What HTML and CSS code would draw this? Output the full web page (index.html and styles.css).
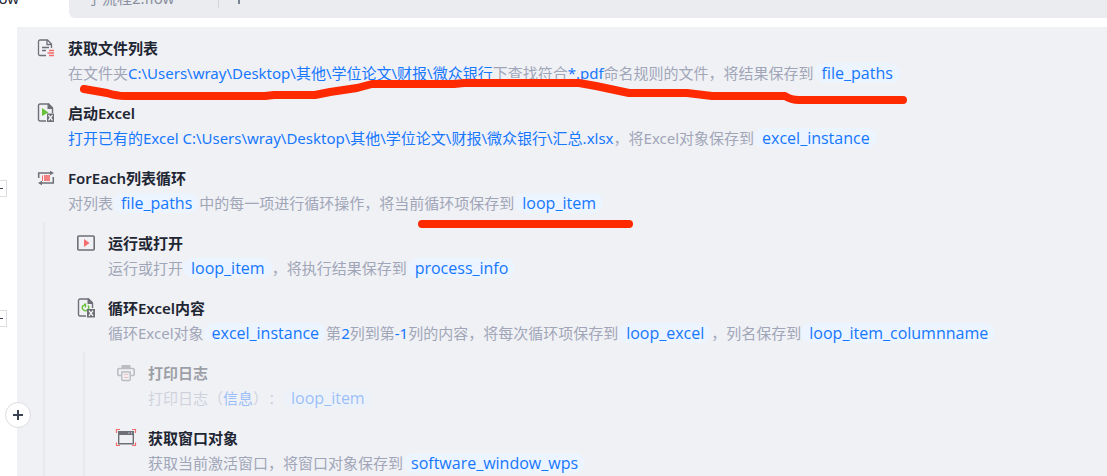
FILE: index.html
```html
<!DOCTYPE html>
<html lang="zh-CN">
<head>
    <meta charset="UTF-8">
    <meta name="viewport" content="width=device-width, initial-scale=1.0">
    <title>流程编辑</title>
    <link rel="stylesheet" href="styles.css">
</head>
<body>
    <header class="tabs">
        <button type="button" class="tab active">flow</button>
        <div class="tab-rest">
            <button type="button" class="tab">子流程2.flow</button>
            <button type="button" class="tab-add" aria-label="新建流程">
                <svg width="12" height="12" viewBox="0 0 12 12"><path d="M6 0v12M0 6h12" stroke="#7b8290" stroke-width="2"/></svg>
            </button>
        </div>
    </header>

    <main class="canvas">
        <div class="step">
            <svg class="icon" viewBox="0 0 18 18" fill="none">
                <path d="M9 16.500H3A1.500 1.500 0 0 1 1.500 15V2.500A1.500 1.500 0 0 1 3 1h7.500l4 4v4M10 1v4.500h4.500M5 8.500h7M5 11.500h4" stroke="#6e7077" stroke-width="1.300"/>
                <path d="M12 11.500h5M10.500 14h6.500M12 16.500h5" stroke="#f56c6c" stroke-width="1.300"/>
            </svg>
            <div class="info">
                <h3>获取文件列表</h3>
                <p>在文件夹<b>C:\Users\wray\Desktop\其他\学位论文\财报\微众银行</b>下查找符合<b>*.pdf</b>命名规则的文件，将结果保存到<span class="chip">file_paths</span></p>
            </div>
        </div>

        <div class="step">
            <svg class="icon" viewBox="0 0 18 18" fill="none">
                <path d="M9 17H3a1.500 1.500 0 0 1-1.500-1.500v-14A1.500 1.500 0 0 1 3 0h8.500L15.500 4v5" stroke="#6e7077" stroke-width="1.400"/>
                <path d="M10.500-.5H12l4 4V5h-5.500z" fill="#6e7077"/>
                <path d="M5 4l6.500 4.500L5 12z" fill="#67c23a"/>
                <path d="M10 9.500h7V18h-7z" fill="#6e7077"/>
                <path d="M11.500 11.200l4 5.200M15.500 11.200l-4 5.200" stroke="#fff" stroke-width="1.200"/>
            </svg>
            <div class="info">
                <h3>启动Excel</h3>
                <p><b>打开已有的Excel C:\Users\wray\Desktop\其他\学位论文\财报\微众银行\汇总.xlsx</b>，将Excel对象保存到<span class="chip">excel_instance</span></p>
            </div>
        </div>

        <div class="step">
            <button type="button" class="collapse" aria-label="收起"></button>
            <svg class="icon" viewBox="0 0 18 18" fill="none">
                <path d="M1.700 9V4H14M16.300 8v6H4" stroke="#6e7077" stroke-width="1.500"/>
                <path d="M13 1.800L17 4l-4 2.200zM5 11.800L1 14l4 2.200z" fill="#6e7077"/>
                <path d="M5.500 6.500V12" stroke="#f56c6c" stroke-width="1"/>
                <path d="M7 6h6v6H7z" fill="#f56c6c" fill-opacity=".85"/>
            </svg>
            <div class="info">
                <h3>ForEach列表循环</h3>
                <p>对列表<span class="chip">file_paths</span>中的每一项进行循环操作，将当前循环项保存到<span class="chip">loop_item</span></p>
            </div>
        </div>

        <div class="children">
            <div class="step">
                <svg class="icon" viewBox="0 0 18 18" fill="none">
                    <rect x=".8" y="2" width="16.400" height="14" rx="1" stroke="#6e7077" stroke-width="1.600"/>
                    <path d="M7 5l5.500 4L7 13z" fill="#f56c6c"/>
                </svg>
                <div class="info">
                    <h3>运行或打开</h3>
                    <p>运行或打开<span class="chip">loop_item</span>，将执行结果保存到<span class="chip">process_info</span></p>
                </div>
            </div>

            <div class="step">
                <button type="button" class="collapse" aria-label="收起"></button>
                <svg class="icon" viewBox="0 0 18 18" fill="none">
                    <path d="M9 17H3a1.500 1.500 0 0 1-1.500-1.500v-14A1.500 1.500 0 0 1 3 0h8.500L15.500 4v5" stroke="#6e7077" stroke-width="1.400"/>
                    <path d="M10.500-.5H12l4 4V5h-5.500z" fill="#6e7077"/>
                    <path d="M6 6.500a3.200 3.200 0 1 0 5 0M8.500 4.500v4M6.500 7l2-2.500" stroke="#67c23a" stroke-width="1.300"/>
                    <path d="M10 10h8v8.500h-8z" fill="#6e7077"/>
                    <path d="M12 11.700l4 5.200M16 11.700l-4 5.200" stroke="#fff" stroke-width="1.200"/>
                </svg>
                <div class="info">
                    <h3>循环Excel内容</h3>
                    <p>循环Excel对象<span class="chip">excel_instance</span>第<b>2</b>列到第<b>-1</b>列的内容，将每次循环项保存到<span class="chip">loop_excel</span>，列名保存到<span class="chip">loop_item_columnname</span></p>
                </div>
            </div>

            <div class="children">
                <div class="step disabled">
                    <svg class="icon" viewBox="0 0 18 18" fill="none">
                        <path d="M4.500 1h9v3h-9z" fill="#6e7077"/>
                        <path d="M4 11.500H1.800a1 1 0 0 1-1-1V6a1.500 1.500 0 0 1 1.500-1.500h13.400A1.500 1.500 0 0 1 17.200 6v4.500a1 1 0 0 1-1 1H14" stroke="#6e7077" stroke-width="1.600"/>
                        <path d="M4.800 8h8.400v7.500a1 1 0 0 1-1 1H5.800a1 1 0 0 1-1-1z" stroke="#6e7077" stroke-width="1.400"/>
                        <path d="M7 10.500h4.500M7 13.500h4.500" stroke="#f56c6c" stroke-width="1.200"/>
                    </svg>
                    <div class="info">
                        <h3>打印日志</h3>
                        <p>打印日志（<b>信息</b>）：<span class="chip">loop_item</span></p>
                    </div>
                </div>

                <button type="button" class="insert" aria-label="插入指令">
                    <svg width="10" height="10" viewBox="0 0 10 10"><path d="M5 0v10M0 5h10" stroke="#3c4352" stroke-width="2"/></svg>
                </button>

                <div class="step">
                    <svg class="icon" viewBox="0 0 18 18" fill="none">
                        <path d="M1 2h16v4H1z" fill="#6e7077"/>
                        <path d="M1.700 2.700h14.600v12.100H1.700z" stroke="#6e7077" stroke-width="1.400"/>
                        <path d="M11.500 4h1M14 4h1" stroke="#fff" stroke-width="1"/>
                        <path d="M-.5 4V.5H3M15 .5h3.500V4M-.5 13.500v3H3M15 16.500h3.500v-3" stroke="#f56c6c" stroke-width="1.200"/>
                    </svg>
                    <div class="info">
                        <h3>获取窗口对象</h3>
                        <p>获取当前激活窗口，将窗口对象保存到<span class="chip">software_window_wps</span></p>
                    </div>
                </div>
            </div>
        </div>

        <!-- hand-drawn marks over the steps -->
        <svg class="marks" width="900" height="210" viewBox="0 0 900 210" fill="none">
            <path d="M67 62l23 4q10 3 18 3h140l9-1h41l15-3 27-4 15-4h82l10-1h115l17 3 33 7h58l25 3h73q6 4 14 4h104"/>
            <path d="M405 197h207"/>
        </svg>
    </main>
</body>
</html>
```
FILE: styles.css
```css
* {
    box-sizing: border-box;
}
body {
    margin: 0;
    height: 100vh;
    overflow: hidden;
    background: #fff;
    font-family: "Noto Sans", "Noto Sans CJK SC", sans-serif;
    font-size: 15px;
    line-height: 20px;
    text-spacing-trim: space-all;
    color: #1f2633;
}
button {
    padding: 0;
    border: none;
    background: none;
    font: inherit;
    color: inherit;
    cursor: pointer;
}

/* tabs */
.tabs {
    display: flex;
    height: 18px;
    margin-bottom: 9px;
}
.tab {
    white-space: nowrap;
}
.tabs > .tab {
    display: flex;
    justify-content: flex-end;
    align-items: flex-end;
    width: 69px;
    margin-left: -50px;
    padding-bottom: 10px;
}
.tab-rest {
    flex: 1;
    display: flex;
    align-items: flex-end;
    margin-left: 50px;
    padding: 0 0 10px 18px;
    background: #ebecf0;
    border-bottom-left-radius: 6px;
    color: #8a90a0;
}
.tab-rest .tab {
    width: 132px;
    text-align: left;
    border-right: 1px solid #d3d5db;
}
.tab-add {
    display: flex;
    margin: 0 0 4px 14px;
}

/* flow canvas */
.canvas {
    position: relative;
    min-height: calc(100vh - 27px);
    margin-left: 17px;
    background: #f0f1f5;
}
.step {
    display: flex;
    gap: 13px;
    padding: 11px 0 9px 20px;
}
.icon {
    flex: none;
    width: 18px;
    height: 18px;
    margin-top: 1px;
    overflow: visible;
}
.info h3 {
    margin: 0 0 5px;
    font-size: 15px;
    font-weight: 600;
}
.info p {
    margin: 0;
    height: 20px;
    color: #a0a6b8;
    white-space: nowrap;
}
.info b {
    font-weight: 400;
    color: #1677ff;
}
.chip {
    display: inline-block;
    padding: 0 7px 0 8px;
    border-radius: 10px;
    background: #ebf4ff;
    font-family: "Open Sans", sans-serif;
    font-size: 16px;
    color: #1677ff;
}
.disabled .info,
.disabled .icon {
    opacity: 0.4;
}
.children {
    margin-left: 26px;
    padding-left: 12px;
    border-left: 2px solid #e9eaec;
}

/* controls in the gutter */
.collapse {
    position: absolute;
    left: -27px;
    width: 17px;
    height: 17px;
    margin-top: 12px;
    border: 1px solid #dcdde0;
    background: #fff;
}
.collapse::before {
    content: "";
    display: block;
    height: 1px;
    margin: 0 3px;
    background: #3c4352;
}
.insert {
    position: absolute;
    left: -12px;
    display: flex;
    justify-content: center;
    align-items: center;
    width: 26px;
    height: 26px;
    margin-top: -15px;
    border: 1px solid #dcdde0;
    border-radius: 50%;
    background: #fff;
}
.marks {
    position: absolute;
    top: 0;
    left: 0;
    pointer-events: none;
    stroke: #ff2a00;
    stroke-width: 8px;
    stroke-linecap: round;
    stroke-linejoin: round;
}
```
